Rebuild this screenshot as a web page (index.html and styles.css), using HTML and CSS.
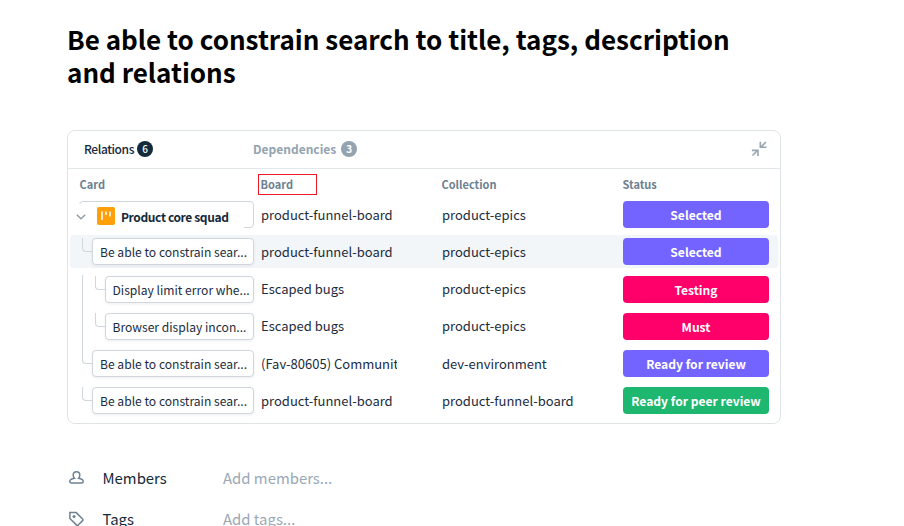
FILE: index.html
```
<!DOCTYPE html>
<html lang="en">
<head>
<meta charset="utf-8">
<title>Card relations</title>
<link rel="stylesheet" href="styles.css">
</head>
<body>
<main class="page">
  <h1 class="title">Be able to constrain search to title, tags, description<br>and relations</h1>

  <section class="panel">
    <header class="tabs">
      <div class="tab tab-active"><span class="tab-name">Relations</span><span class="count">6</span></div>
      <div class="tab tab-muted"><span class="tab-name">Dependencies</span><span class="count">3</span></div>
      <svg class="collapse" width="16" height="16" viewBox="0 0 16 16" fill="none" stroke="#98a6b2" stroke-width="1.6"><path d="M15 1 10 6M9.300 .8V6.300H15.500M1.500 14.500 6.500 9.500M.9 9.400H7V15"/></svg>
    </header>
    <div class="grid-row columns">
      <span class="col">Card</span>
      <span class="col"><span class="marked">Board</span></span>
      <span class="col">Collection</span>
      <span class="col">Status</span>
    </div>
    <div class="rows">
      <div class="grid-row row">
        <div class="card-cell root">
          <div class="card root-card"></div>
          <div class="root-label">
            <svg class="chevron" width="10" height="6" viewBox="0 0 10 6" fill="none" stroke="#8d9aa6" stroke-width="1.3"><path d="M.8 .8 5 4.8 9.2 .8"/></svg>
            <svg class="board-icon" width="18" height="18" viewBox="0 0 18 18"><rect width="18" height="18" rx="2" fill="#ff9f0a"/><path d="M5 4.500v8.500M9 4.500v3.500M13 4.500v5" stroke="#fff" stroke-width="1.500"/></svg>
            <span class="root-name">Product core squad</span>
          </div>
        </div>
        <span class="cell">product-funnel-board</span><span class="cell">product-epics</span><span class="status violet">Selected</span>
      </div>
      <div class="grid-row row current">
        <div class="card-cell child"><i class="elbow"></i><div class="card">Be able to constrain sear...</div></div>
        <span class="cell">product-funnel-board</span><span class="cell">product-epics</span><span class="status violet">Selected</span>
      </div>
      <div class="grid-row row">
        <div class="card-cell grandchild"><i class="elbow"></i><div class="card">Display limit error whe...</div></div>
        <span class="cell">Escaped bugs</span><span class="cell">product-epics</span><span class="status pink">Testing</span>
      </div>
      <div class="grid-row row">
        <div class="card-cell grandchild"><i class="elbow"></i><div class="card">Browser display incon...</div></div>
        <span class="cell">Escaped bugs</span><span class="cell">product-epics</span><span class="status pink">Must</span>
      </div>
      <div class="grid-row row">
        <div class="card-cell child"><i class="elbow long"></i><div class="card">Be able to constrain sear...</div></div>
        <span class="cell">(Fav-80605) Communit</span><span class="cell">dev-environment</span><span class="status violet">Ready for review</span>
      </div>
      <div class="grid-row row">
        <div class="card-cell child"><i class="elbow"></i><div class="card">Be able to constrain sear...</div></div>
        <span class="cell">product-funnel-board</span><span class="cell">product-funnel-board</span><span class="status green">Ready for peer review</span>
      </div>
    </div>
  </section>

  <section class="fields">
    <div class="field">
      <svg width="16" height="16" viewBox="0 0 16 16" fill="none" stroke="#6f8294" stroke-width="1.500"><path d="M6.400 8.300C5.400 7.400 5.200 6.200 5.200 5.100a3.300 3.300 0 0 1 6.600 0c0 1.100-.2 2.300-1.200 3.200 2.600.5 4.600 1.500 4.600 3.100 0 1-.6 1.500-1.600 1.500H3.400c-1 0-1.600-.5-1.600-1.500 0-1.600 2-2.600 4.600-3.100Z"/></svg>
      <span class="field-name">Members</span><span class="placeholder">Add members...</span>
    </div>
    <div class="field">
      <svg width="16" height="16" viewBox="0 0 16 16" fill="none" stroke="#6f8294" stroke-width="1.500"><path d="M1.900 1.600H8.200L14.600 8q.8.800 0 1.600L10.200 14.100q-.8.800-1.600 0L1.900 7.500Z"/><circle cx="6" cy="5.500" r="1.500" fill="#6f8294" stroke="none"/></svg>
      <span class="field-name">Tags</span><span class="placeholder">Add tags...</span>
    </div>
  </section>
</main>
</body>
</html>
```
FILE: styles.css
```
* { box-sizing: border-box; }
body {
  margin: 0;
  height: 526px;
  overflow: hidden;
  background: #fff;
  color: #1b2c3d;
  font-family: "Noto Sans CJK SC", "Noto Sans", sans-serif;
  font-size: 13px;
  line-height: 20px;
}
.page { padding: 22px 0 0 67px; }
.title {
  margin: 0;
  height: 108px;
  color: #000;
  font-size: 26.030px;
  line-height: 33px;
  font-weight: 700;
  white-space: nowrap;
}
.panel {
  width: 714px;
  height: 294px;
  border: 1px solid #dfe4e7;
  border-radius: 8px;
}
.tabs {
  display: flex;
  align-items: center;
  height: 38px;
  padding: 0 13px 2px 16px;
  border-bottom: 1px solid #e2e7ea;
  font-size: 12px;
}
.tab { display: flex; align-items: center; font-weight: 700; }
.tab-active { width: 169px; gap: 3px; color: #14293a; font-weight: 500; }
.tab-active .tab-name { letter-spacing: -.4px; }
.tab-muted { gap: 5px; color: #94a3b0; }
.count {
  width: 16px;
  height: 16px;
  border-radius: 50%;
  background: #14293a;
  color: #fff;
  font-size: 10px;
  line-height: 16px;
  text-align: center;
}
.tab-muted .count { background: #94a3b0; }
.collapse { margin-left: auto; }
.grid-row {
  display: grid;
  grid-template-columns: 191px 181px 181px 146px;
  align-items: center;
  margin: 0 2px;
}
.columns {
  height: 29px;
  padding-top: 1px;
  color: #6d7f90;
  font-size: 11px;
  font-weight: 700;
}
.col { margin-left: -.5px; }
.col:first-child { padding-left: 10px; }
.marked {
  display: block;
  width: 59px;
  height: 21px;
  margin: 1px 0 0 -2.500px;
  padding-left: 1.500px;
  border: 1px solid #ed1c24;
  line-height: 18px;
}
.rows { display: grid; row-gap: 4.280px; }
.row { height: 33px; border-radius: 3px; }
.current { background: #f3f6f9; }
.cell {
  width: 136px;
  overflow: hidden;
  white-space: nowrap;
}
.card-cell { position: relative; height: 27px; padding-right: 7px; }
.child { padding-left: 22px; }
.grandchild { padding-left: 34.500px; }
.card {
  height: 27px;
  padding-left: 7px;
  border: 1px solid #d0d6dc;
  border-radius: 4px;
  background: #fff;
  box-shadow: 0 1px 3px rgba(20, 40, 60, .08);
  font-size: 12.100px;
  line-height: 26px;
  white-space: nowrap;
}
.elbow {
  position: absolute;
  left: 12px;
  top: 0;
  width: 10px;
  height: 14px;
  border: solid #cfd6dc;
  border-width: 0 0 1px 1px;
  border-bottom-left-radius: 4px;
}
.grandchild .elbow { left: 25px; }
.elbow.long { top: -75px; height: 89px; }
.root { padding-left: 9px; }
.root-card { box-shadow: none; }
.root-label {
  position: absolute;
  left: 0;
  top: 3px;
  display: flex;
  align-items: center;
  width: 174px;
  height: 25px;
  padding-left: 6px;
  background: #fff;
}
.board-icon { margin: 0 6px 1px 11px; }
.root-name { color: #14293a; font-size: 12px; font-weight: 700; letter-spacing: -.38px; }
.status {
  height: 27px;
  border-radius: 4px;
  color: #fff;
  font-size: 12.100px;
  font-weight: 700;
  line-height: 27px;
  text-align: center;
}
.violet { background: #7363ff; }
.pink { background: #ff006b; }
.green { background: #1db770; }
.fields { padding-top: 37px; }
.field {
  display: flex;
  align-items: center;
  height: 33px;
  margin-bottom: 8.500px;
  padding-left: 1px;
  font-size: 14.900px;
}
.field svg { margin-right: 18.500px; }
.field-name { width: 120.500px; color: #14293a; }
.placeholder { color: #9aa8b5; }
```
